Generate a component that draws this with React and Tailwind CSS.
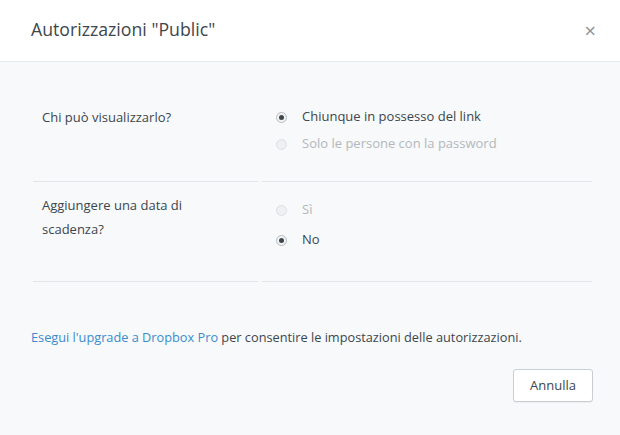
export default function App() {
  return (
    <div className="w-[620px] h-[435px] bg-[#f7f9fa] flex flex-col text-[#3d464d]" style={{ fontFamily: '"Open Sans", "Liberation Sans", sans-serif' }}>
      {/* Header */}
      <div className="h-[62px] bg-white border-b border-[#e6e8ea] flex items-center justify-between pl-[31px] pr-[24px] shrink-0">
        <h1 className="text-[17.7px] text-[#3d464d] pb-[2px]">Autorizzazioni "Public"</h1>
        <button className="text-[#8c9196] text-[20px] leading-none">×</button>
      </div>

      {/* Body */}
      <div className="flex-1 pl-[33px] pr-[28px] pt-[46px]">
        <div className="flex gap-[4px]">
          <div className="w-[225px] border-b border-[#e3e6e8] pl-[9px] pb-[28px] text-[13px]">
            Chi può visualizzarlo?
          </div>
          <div className="flex-1 border-b border-[#e3e6e8] pl-[14px] flex flex-col gap-[9px] pb-[28px] text-[13px]">
            <Radio checked label="Chiunque in possesso del link" />
            <Radio disabled label="Solo le persone con la password" />
          </div>
        </div>
        <div className="flex gap-[4px]">
          <div className="w-[225px] border-b border-[#e3e6e8] pl-[9px] pt-[11px] pb-[40px] text-[13px] leading-[24px]">
            Aggiungere una data di<br />scadenza?
          </div>
          <div className="flex-1 border-b border-[#e3e6e8] pl-[14px] pt-[19px] flex flex-col gap-[12px] text-[13px]">
            <Radio disabled label="Sì" />
            <Radio checked label="No" />
          </div>
        </div>

        <p className="text-[12.75px] mt-[46px] -ml-[2px]">
          <a className="text-[#3a8ccf]">Esegui l'upgrade a Dropbox Pro</a> per consentire le impostazioni delle autorizzazioni.
        </p>

        <div className="flex justify-end mt-[22px] -mr-[1px]">
          <button className="w-[80px] h-[33px] bg-white border border-[#c9ced2] rounded-[3px] text-[13px] font-medium text-[#3d464d] shadow-[0_1px_1px_rgba(0,0,0,0.05)]">
            Annulla
          </button>
        </div>
      </div>
    </div>
  )
}

function Radio({ checked, disabled, label }) {
  return (
    <div className="flex items-center h-[18px]">
      <span
        className={
          "w-[11px] h-[11px] rounded-full border flex items-center justify-center mr-[15px] " +
          (disabled ? "border-[#dde0e3] bg-[#eef0f2]" : "border-[#b7bcc0] bg-[#f2f3f4]")
        }
      >
        {checked && <span className="w-[5px] h-[5px] rounded-full bg-[#3d464d]" />}
      </span>
      <span className={disabled ? "text-[#b3b8bc]" : "text-[#3d464d]"}>{label}</span>
    </div>
  )
}
